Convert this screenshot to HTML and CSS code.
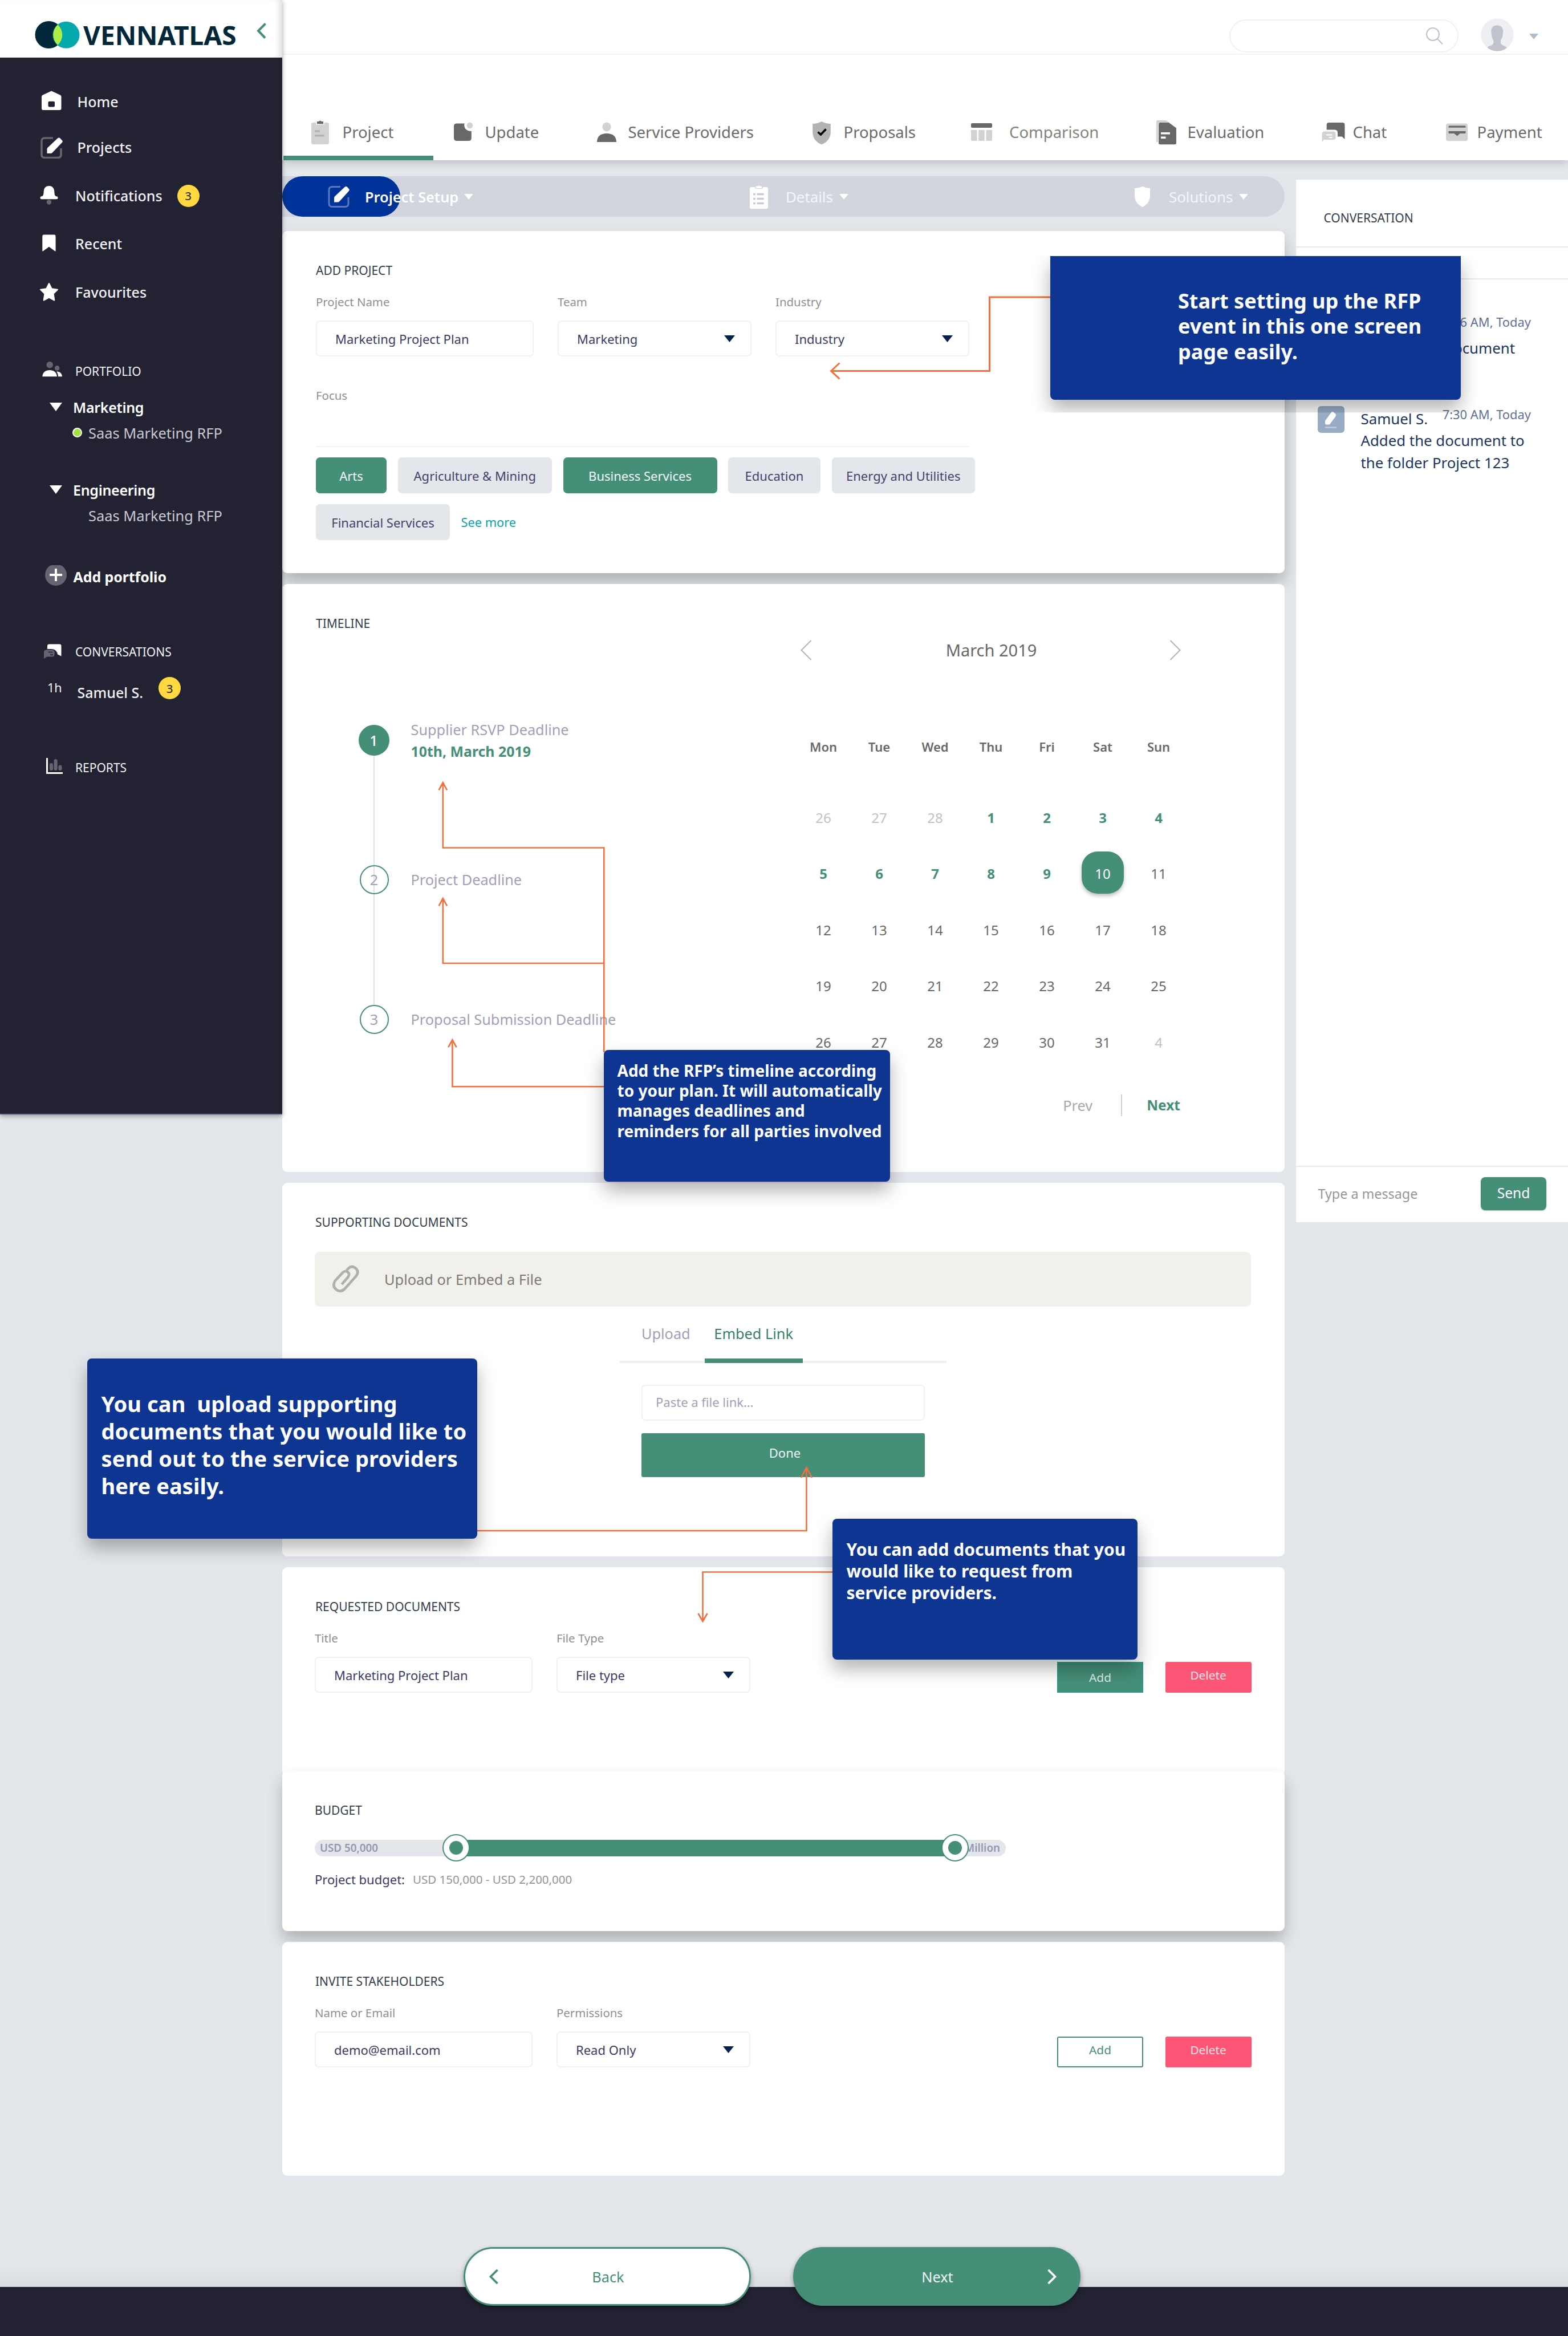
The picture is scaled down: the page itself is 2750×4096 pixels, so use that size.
FILE: index.html
```html
<!DOCTYPE html>
<html lang="en">
<head>
<meta charset="utf-8">
<title>VennAtlas – Project Setup</title>
<link rel="stylesheet" href="styles.css">
</head>
<body>
<div class="page">
  <div class="shell">
    <aside class="sidebar">
      <div class="brand">
        <svg width="80" height="50" viewBox="0 0 80 50"><circle cx="24.500" cy="25" r="24" fill="#02263a"/><circle cx="55" cy="25.300" r="23.500" fill="#05a8ad"/><path d="M40.300 7.300a24 24 0 0 1 0 35.600a24 24 0 0 1 0-35.600z" fill="#adef42"/></svg>
        <span class="brand-name">VENNATLAS</span>
        <svg class="brand-collapse" width="18" height="30" viewBox="0 0 18 30"><path d="M15.500 2.500L3 15l12 12.500" fill="none" stroke="#458f79" stroke-width="4"/></svg>
      </div>
      <nav class="side-nav">
        <a class="nav-row nav-wide"><svg width="40" height="40" viewBox="0 0 40 40"><path fill="#fff" fill-rule="evenodd" d="M20.200 1.500L35.500 8.500q2 1 2 3V32q0 3-3 3H6q-3 0-3-3V11.500q0-2 2-3zM16.500 19.700q-2 0-2 2v5.800q0 2 2 2H24q2 0 2-2v-5.800q0-2-2-2z"/></svg>Home</a>
        <a class="nav-row nav-wide nav-projects"><svg width="40" height="40" viewBox="0 0 40 40"><path d="M23 4H8.500Q3 4 3 9.500V33q0 5.500 5.500 5.500h23q5.500 0 5.500-5.500V22" fill="none" stroke="#656470" stroke-width="3.600"/><path fill="#fff" d="M12.500 31v-7.500q0-1.500 1-2.500L31 4.500q2.500-2 4.500 0l3.500 3.700q1.500 1.800 0 3.500L22 29.500q-1.500 1.500-3.500 1.500z"/></svg>Projects</a>
        <a class="nav-row nav-notifications"><svg width="40" height="40" viewBox="0 0 40 40"><circle cx="20" cy="31.500" r="4.200" fill="#656470"/><path fill="#fff" d="M20 3c6.500 0 9 4.500 9.300 10 .2 4 .7 8.300 3.700 8.300a2.500 2.500 0 0 1 0 5H7a2.500 2.500 0 0 1 0-5c3 0 3.500-4.300 3.700-8.300C11 7.500 13.500 3 20 3z"/></svg>Notifications<span class="badge">3</span></a>
        <a class="nav-row nav-recent"><svg width="40" height="40" viewBox="0 0 40 40"><path fill="#fff" d="M11 4.500h18q2.600 0 2.600 3V33.500q-1.500 0-3-1.500L20 25.700 11.300 32q-1.500 1.500-3 1.500V7.500q0-3 2.700-3z"/></svg>Recent</a>
        <a class="nav-row nav-favourites"><svg width="40" height="40" viewBox="0 0 40 40"><path fill="#fff" stroke="#fff" stroke-width="2" stroke-linejoin="round" d="M20 5l4.700 9.300 10.300 1.500-7.400 7.200 1.700 11.500L20 29.500l-9.300 5 1.700-11.500L5 15.800l10.300-1.500z"/></svg>Favourites</a>
        <div class="nav-row nav-heading nav-portfolio"><svg width="40" height="40" viewBox="0 0 40 40"><circle cx="15.200" cy="8.700" r="5.800" fill="#656470"/><circle cx="28.200" cy="14.400" r="4.300" fill="#656470"/><path fill="#fff" d="M2.300 29.300C3 21.500 8 18 15 18s12.500 3.500 13 11.300zM30 29.300c0-3-.8-6.300-3-8.800 5.500 0 9.500 2.500 10 8.800z"/></svg>PORTFOLIO</div>
        <div class="nav-row nav-folder"><svg width="22" height="15" viewBox="0 0 22 15"><path d="M0 0h22L11 15z" fill="#fff"/></svg>Marketing</div>
        <div class="nav-row nav-leaf"><i class="dot"></i>Saas Marketing RFP</div>
        <div class="nav-row nav-folder nav-engineering"><svg width="22" height="15" viewBox="0 0 22 15"><path d="M0 0h22L11 15z" fill="#fff"/></svg>Engineering</div>
        <div class="nav-row nav-leaf"><i class="dot dot-off"></i>Saas Marketing RFP</div>
        <div class="nav-row nav-add"><svg width="40" height="40" viewBox="0 0 40 40"><circle cx="20" cy="17" r="19" fill="#656470"/><path d="M20 6v22M9 17h22" stroke="#fff" stroke-width="4"/></svg>Add portfolio</div>
        <div class="nav-row nav-heading nav-conversations"><svg width="40" height="40" viewBox="0 0 40 40"><path fill="#fff" d="M14.500 6.500h18q3 0 3 3V27.500L29 24.500q-1.500-9-10-9.500h-8V9.500q0-3 3.500-3z"/><path fill="#656470" d="M9 16.500h10q4.600 0 4.600 4v4q0 4-4.600 4h-9L5 32V20.500q0-4 4-4z"/><path d="M12.500 20.500h8M16 25h5" stroke="#222233" stroke-width="1.300"/></svg>CONVERSATIONS</div>
        <div class="nav-row nav-person"><span class="ago">1h</span>Samuel S.<span class="badge">3</span></div>
        <div class="nav-row nav-heading nav-reports"><svg width="40" height="40" viewBox="0 0 40 40"><path d="M10.500 3v26.500H38" fill="none" stroke="#fff" stroke-width="3"/><path d="M18 15v7M25.600 8v14M33.500 18.500V22" stroke="#656470" stroke-width="6" stroke-linecap="round"/></svg>REPORTS</div>
      </nav>
    </aside>

    <div class="main">
      <header class="header">
        <div class="topbar">
          <div class="search"><svg width="32" height="32" viewBox="0 0 32 32"><circle cx="13" cy="13" r="11" fill="none" stroke="#b9c3cf" stroke-width="2"/><path d="M20.500 20.500L30 30.500" stroke="#b9c3cf" stroke-width="2"/></svg></div>
          <svg width="58" height="58" viewBox="0 0 58 58"><circle cx="29" cy="29" r="28.700" fill="#eeeff3"/><path fill="#c0c3cb" d="M28.700 12.600c8 0 10.500 5 10.500 11 0 3-.7 4-.9 7.500-.3 4-2.500 5-3.300 8-.6 3-.5 5.500 2 7.500 3 2 7.500 2.500 8.500 5.500-4 3.500-10 5.500-16.500 5.500S16 55.500 11.700 51.600c1-3 5.500-3 8.500-5.100 2.500-2 2.700-4.500 2-7.500-.7-3-2.700-4-3-8-.3-3.500-.9-4.500-.9-7.500 0-6 2.400-10.900 10.400-10.900z"/></svg>
          <svg class="avatar-caret" width="16" height="10" viewBox="0 0 16 10"><path d="M0 0h16L8 10z" fill="#aebccb"/></svg>
        </div>
        <nav class="tabs">
          <a class="tab"><svg width="44" height="44" viewBox="0 0 44 44"><rect y="5" width="31" height="38" rx="3" fill="#d2d2d2"/><path d="M8.500 3.500h14V8.500h-14z" fill="#fff"/><path d="M10 3h3.200a2.500 2.500 0 0 1 4.600 0H21v4.300H10z" fill="#686868"/><path d="M6 20h9M6 27.800h16.500" stroke="#b3b3b3" stroke-width="3.600"/></svg>Project</a>
          <a class="tab"><svg width="44" height="44" viewBox="0 0 44 44"><path d="M5 6.500h13.500c-1.500 7 2.500 13.500 12.300 13.500v12q0 5-5 5H5q-5 0-5-5V11.500q0-5 5-5z" fill="#686868"/><circle cx="28" cy="10" r="5.300" fill="#d2d2d2"/></svg>Update</a>
          <a class="tab"><svg width="44" height="44" viewBox="0 0 44 44"><circle cx="17" cy="12.500" r="7.700" fill="#d2d2d2"/><path d="M0 39C0 29 6.500 24 17 24s17 5 17 15z" fill="#686868"/></svg>Service Providers</a>
          <a class="tab"><svg width="44" height="44" viewBox="0 0 44 44"><path d="M16 3q7.500 4 15.800 4v15C31.800 33 24.500 40 16 43.300 7.500 40 .2 33 .2 22V7Q8.500 7 16 3z" fill="#b3b3b3"/><path d="M9.500 21.500l5 4.500 9-9.500" fill="none" stroke="#000" stroke-width="3.600"/></svg>Proposals</a>
          <a class="tab tab-comparison"><svg width="44" height="44" viewBox="0 0 44 44"><rect y="6" width="37" height="8" rx="2" fill="#686868"/><path d="M0 18h10.500v19H2q-2 0-2-2zM13.200 18h10.500v19H13.200zM26.500 18H37v17q0 2-2 2h-8.500z" fill="#d2d2d2"/></svg>Comparison</a>
          <a class="tab"><svg width="44" height="44" viewBox="0 0 44 44"><path d="M2 1h15l6 4H6Q3 5 3 8v31H0V3q0-2 2-2z" fill="#d2d2d2"/><path d="M6.500 5H22l13 9.500V41q0 2.300-2.500 2.300h-26Q4 43.300 4 41V7.500Q4 5 6.500 5z" fill="#686868"/><path d="M8 23.700h16M8 31.200h8.500" stroke="#fff" stroke-width="3.600"/></svg>Evaluation</a>
          <a class="tab"><svg width="44" height="44" viewBox="0 0 44 44"><path d="M12.500 5h24q4 0 4 4v25l-5-4.500H28V23q0-5.500-5.500-5.500H8.700V9q0-4 3.800-4z" fill="#686868"/><path d="M4.500 20.500h15.500q4.500 0 4.500 4.500V31q0 4-4.500 4H4l-3.500 4V25q0-4.500 4-4.500z" fill="#d2d2d2"/><path d="M8 26.500h10.500M13 31h5.500" stroke="#fff" stroke-width="2"/></svg>Chat</a>
          <a class="tab"><svg width="44" height="44" viewBox="0 0 44 44"><rect y="6.600" width="38" height="30.600" rx="4" fill="#d2d2d2"/><path d="M4.500 13.800v-1.800q0-1.500 1.500-1.500h27q1.500 0 1.500 1.500v1.800zM4.500 20h30v2.500q0 1.500-1.500 1.500h-8.500L19.500 28.500 14.500 24H6q-1.500 0-1.500-1.500z" fill="#686868"/></svg>Payment</a>
        </nav>
        <div class="tab-indicator"></div>
      </header>

      <div class="content">
        <div class="column">
          <div class="steps">
            <div class="steps-progress"></div>
            <div class="step step-current"><svg width="40" height="40" viewBox="0 0 40 40"><path d="M22 2.500H7.500Q2 2.500 2 8v24q0 5.500 5.500 5.500h23Q36 37.500 36 32V21" fill="none" stroke="#5a7abd" stroke-width="3"/><path fill="#fff" d="M11 29.500V22q0-1.500 1-2.500L29.500 3q2.500-2 4.500 0l3 3.200q1.500 1.800 0 3.500L20.500 28q-1.500 1.500-3.500 1.500z"/></svg>Project Setup<svg class="caret" width="16" height="10" viewBox="0 0 16 10"><path d="M0 0h16L8 10z" fill="#fff"/></svg></div>
            <div class="step"><svg width="40" height="42" viewBox="0 0 40 42"><path d="M3 4h6.500v3h13V4H29q3 0 3 3v32q0 3-3 3H3q-3 0-3-3V7q0-3 3-3z" fill="#fff"/><path d="M11 2.500h3a2.500 2.500 0 0 1 4 0h3v3.500H11z" fill="#fff"/><path d="M6 16.500h4M12.500 16.500h12M6 24.500h4M12.500 24.500h12M6 32.500h4M12.500 32.500h12" stroke="#c9cbd9" stroke-width="3.600"/></svg>Details<svg class="caret" width="16" height="10" viewBox="0 0 16 10"><path d="M0 0h16L8 10z" fill="#fff"/></svg></div>
            <div class="step"><svg width="37" height="36" viewBox="0 0 37 36"><path d="M13.500 0Q20 3 27 3v13c0 10-5.500 16-13.500 20C5.500 32 0 26 0 16V3q7 0 13.500-3z" fill="#fff"/></svg>Solutions<svg class="caret" width="16" height="10" viewBox="0 0 16 10"><path d="M0 0h16L8 10z" fill="#fff"/></svg></div>
          </div>

          <section class="card card-project">
            <h2>ADD PROJECT</h2>
            <div class="form-row">
              <label class="field field-text">Project Name<span class="control">Marketing Project Plan</span></label>
              <label class="field">Team<span class="control select">Marketing<svg width="19" height="12" viewBox="0 0 19 12"><path d="M0 0h19L9.500 12z" fill="#06204a"/></svg></span></label>
              <label class="field">Industry<span class="control select">Industry<svg width="19" height="12" viewBox="0 0 19 12"><path d="M0 0h19L9.500 12z" fill="#06204a"/></svg></span></label>
            </div>
            <div class="focus-label">Focus</div>
            <div class="tags">
              <span class="tag tag-on tag-arts">Arts</span><span class="tag tag-agri">Agriculture &amp; Mining</span><span class="tag tag-on tag-business">Business Services</span><span class="tag tag-education">Education</span><span class="tag tag-energy">Energy and Utilities</span><span class="tag tag-finance">Financial Services</span><a class="see-more">See more</a>
            </div>
          </section>

          <section class="card card-timeline">
            <h2>TIMELINE</h2>
            <div class="schedule">
              <ol class="timeline">
                <li><b class="pin pin-on">1</b><span>Supplier RSVP Deadline<br><strong>10th, March 2019</strong></span></li>
                <li><b class="pin">2</b><span>Project Deadline</span></li>
                <li><b class="pin">3</b><span>Proposal Submission Deadline</span></li>
              </ol>
              <div class="calendar">
                <div class="cal-head">
                  <svg width="20" height="36" viewBox="0 0 20 36"><path d="M18.500 1L1.500 18l17 17" fill="none" stroke="#b3b3b3" stroke-width="2"/></svg>
                  <span>March 2019</span>
                  <svg width="20" height="36" viewBox="0 0 20 36"><path d="M1.500 1l17 17-17 17" fill="none" stroke="#b3b3b3" stroke-width="2"/></svg>
                </div>
                <div class="cal-grid cal-days"><span>Mon</span><span>Tue</span><span>Wed</span><span>Thu</span><span>Fri</span><span>Sat</span><span>Sun</span></div>
                <div class="cal-grid cal-dates">
                  <span class="out">26</span><span class="out">27</span><span class="out">28</span><span class="on">1</span><span class="on">2</span><span class="on">3</span><span class="on">4</span>
                  <span class="on">5</span><span class="on">6</span><span class="on">7</span><span class="on">8</span><span class="on">9</span><span class="picked"><b>10</b></span><span>11</span>
                  <span>12</span><span>13</span><span>14</span><span>15</span><span>16</span><span>17</span><span>18</span>
                  <span>19</span><span>20</span><span>21</span><span>22</span><span>23</span><span>24</span><span>25</span>
                  <span>26</span><span>27</span><span>28</span><span>29</span><span>30</span><span>31</span><span class="out">4</span>
                </div>
                <div class="cal-pager"><span>Prev</span><i></i><strong>Next</strong></div>
              </div>
            </div>
          </section>

          <section class="card card-supporting">
            <h2>SUPPORTING DOCUMENTS</h2>
            <div class="upload-bar"><svg width="48" height="50" viewBox="0 0 48 50"><path d="M25 9.500l3-3.500q6.500-6 13 0t.5 13.500L22 41.500q-8 8-15.500 1.500T5 27.500L18.500 13q4.500-4 8.500-.5t.5 8.500L16.500 34" fill="none" stroke="#b0afaa" stroke-width="4.600"/></svg>Upload or Embed a File</div>
            <div class="embed">
              <div class="embed-tabs"><span>Upload</span><span class="embed-on">Embed Link</span></div>
              <div class="embed-input">Paste a file link…</div>
              <div class="embed-done">Done</div>
            </div>
          </section>

          <section class="card card-requested">
            <h2>REQUESTED DOCUMENTS</h2>
            <div class="form-row">
              <label class="field field-text">Title<span class="control">Marketing Project Plan</span></label>
              <label class="field">File Type<span class="control select">File type<svg width="19" height="12" viewBox="0 0 19 12"><path d="M0 0h19L9.500 12z" fill="#06204a"/></svg></span></label>
              <div class="row-actions"><span class="btn btn-add-solid">Add</span><span class="btn btn-delete">Delete</span></div>
            </div>
          </section>

          <section class="card card-budget">
            <h2>BUDGET</h2>
            <div class="slider">
              <span>USD 50,000</span><span>Million</span>
              <div class="slider-fill"><i class="knob"></i><i class="knob"></i></div>
            </div>
            <p class="budget-line"><b>Project budget:</b>USD 150,000 - USD 2,200,000</p>
          </section>

          <section class="card card-invite">
            <h2>INVITE STAKEHOLDERS</h2>
            <div class="form-row">
              <label class="field field-text">Name or Email<span class="control">demo@email.com</span></label>
              <label class="field">Permissions<span class="control select">Read Only<svg width="19" height="12" viewBox="0 0 19 12"><path d="M0 0h19L9.500 12z" fill="#06204a"/></svg></span></label>
              <div class="row-actions"><span class="btn btn-add">Add</span><span class="btn btn-delete">Delete</span></div>
            </div>
          </section>
        </div>

        <aside class="panel">
          <div class="panel-title">CONVERSATION</div>
          <div class="panel-sub"></div>
          <div class="messages">
            <div class="message message-short">
              <div class="message-text">document</div>
              <time>7:36 AM, Today</time>
            </div>
            <div class="message">
              <span class="message-icon"><svg width="26" height="30" viewBox="0 0 26 30"><path d="M13.500 2.500q2-2.500 4.500-.5l3 2.500q2 2 .5 4.500L12 22q-1 1.500-3 1.500H5q-2 0-2-2V18q0-1.500 1-2.500z" fill="#fff"/><path d="M3 28.500h20" stroke="#b7c6d8" stroke-width="3"/></svg></span>
              <div class="message-text">Samuel S.<br>Added the document to<br>the folder Project 123</div>
              <time>7:30 AM, Today</time>
            </div>
          </div>
          <div class="composer"><span>Type a message</span><b>Send</b></div>
        </aside>
      </div>
    </div>
  </div>

  <footer class="footer">
    <a class="pill pill-back"><svg width="18" height="28" viewBox="0 0 18 28"><path d="M15.500 2L3.500 14l12 12" fill="none" stroke="#458f79" stroke-width="3.600"/></svg><span>Back</span></a>
    <a class="pill pill-next"><span>Next</span><svg width="18" height="28" viewBox="0 0 18 28"><path d="M2.500 2l12 12-12 12" fill="none" stroke="#fff" stroke-width="3.600"/></svg></a>
  </footer>

  <svg class="arrows" width="2750" height="4096" viewBox="0 0 2750 4096" fill="none" stroke="#f2703d">
    <path stroke-width="3" d="M1842 521H1735.500V650.400H1458M1472.500 636.500L1457.500 650.400l15 14"/>
    <path stroke-width="2.600" d="M1059.300 1845V1486.500H776.800V1374M769.600 1385.300l7.200-13 7.200 13M1059.300 1689H776.800V1577M769.600 1588.300l7.200-13 7.200 13M1062 1905.300H793.400V1825M786.200 1836.300l7.200-13 7.200 13"/>
    <path stroke-width="2.600" d="M836 2684H1414.500V2575M1405 2591l9.500-17.500 9.500 17.500M1462 2756.500H1232.500V2842M1224.500 2829l8 14 8-14"/>
  </svg>
  <div class="callout callout-setup">Start setting up the RFP<br>event in this one screen<br>page easily.</div>
  <div class="callout callout-timeline">Add the RFP’s timeline according<br>to your plan. It will automatically<br>manages deadlines and<br>reminders for all parties involved</div>
  <div class="callout callout-upload">You can&nbsp; upload supporting<br>documents that you would like to<br>send out to the service providers<br>here easily.</div>
  <div class="callout callout-request">You can add documents that you<br>would like to request from<br>service providers.</div>
</div>
</body>
</html>
```
FILE: styles.css
```css
* { box-sizing: border-box; }
body { margin: 0; background: #e3e6eb; font-family: "Noto Sans", sans-serif; font-weight: 400; color: #43426b; }
svg { display: block; flex: none; }
h2, p, ol { margin: 0; padding: 0; font-weight: 400; }

.page { position: relative; width: 2750px; height: 4096px; overflow: hidden; }
.shell { display: flex; align-items: flex-start; height: 4010px; background: linear-gradient(#e3e6eb 3970px, #d8dbe0); }

/* sidebar */
.sidebar { position: relative; z-index: 3; width: 495px; height: 1954px; background: #222233; border-bottom: 2px solid #3d3b63; box-shadow: 0 3px 8px rgba(0, 0, 0, .35); }
.brand { display: flex; align-items: center; height: 101px; padding: 20px 0 0 61px; background: #fff; box-shadow: inset -12px 0 14px -10px rgba(0, 0, 0, .2); }
.brand-name { padding-left: 5px; font-size: 46px; font-weight: 700; line-height: 60px; color: #02263a; }
.brand-collapse { margin: -14px 0 0 35px; }
.side-nav { padding-top: 57px; color: #f2f2f5; font-size: 25px; font-weight: 500; }
.nav-row { display: flex; align-items: center; gap: 26px; height: 40px; padding-left: 66px; white-space: nowrap; }
.nav-wide { padding-left: 69.500px; }
.nav-projects { margin-top: 40px; }
.nav-notifications { margin-top: 45px; }
.nav-recent { margin-top: 44px; }
.nav-favourites { margin-top: 44.500px; }
.nav-heading { gap: 20px; padding-left: 72px; font-size: 21px; font-weight: 400; }
.nav-portfolio { margin-top: 99.500px; }
.nav-folder { gap: 19.500px; padding-left: 86.500px; margin-top: 22.500px; font-weight: 600; letter-spacing: -.3px; color: #fff; }
.nav-engineering { margin-top: 60px; }
.nav-leaf { gap: 11px; padding-left: 127px; margin-top: 5px; font-size: 25.400px; font-weight: 400; color: #c9c9d0; }
.nav-add { gap: 11px; padding-left: 77.500px; margin-top: 67px; font-weight: 700; letter-spacing: -.1px; color: #fff; }
.nav-conversations { margin-top: 92px; }
.nav-person { gap: 0; padding-left: 83px; margin-top: 31px; }
.nav-reports { margin-top: 92px; }
.ago { width: 52.500px; padding-bottom: 17px; font-size: 21.500px; font-weight: 400; }
.dot { width: 17px; height: 17px; border: 2px solid #fff; border-radius: 50%; background: #9fe33c; }
.dot-off { visibility: hidden; }
.badge { display: flex; align-items: center; justify-content: center; width: 39px; height: 39px; border-radius: 50%; background: #ffd841; color: #2f3a2a; font-size: 20.500px; font-weight: 500; }
.nav-person .badge { margin: 0 0 14px 27px; flex: none; }

/* header */
.main { width: 2255px; }
.header { position: relative; z-index: 2; height: 281px; background: #fff; box-shadow: 0 3px 16px rgba(0, 0, 0, .2); }
.topbar { display: flex; justify-content: flex-end; height: 96px; padding: 32px 52px 0 0; border-bottom: 2px solid #f3f3f4; }
.search { display: flex; align-items: center; justify-content: flex-end; width: 402px; height: 58px; margin: 2px 39px 0 0; padding-right: 24px; border: 2px solid #f0f1f5; border-radius: 29px; }
.avatar-caret { margin: 27px 0 0 27px; }
.tabs { display: grid; grid-template-columns: 250px 251px 378px 278px 325px 290px 218px 214px; align-content: start; height: 177px; padding: 96px 0 0 51px; }
.tab { display: flex; align-items: center; gap: 10.500px; height: 80px; color: #6a6a6a; font-size: 27.500px; line-height: 36px; white-space: nowrap; }
.tab-comparison { gap: 23px; color: #84827a; }
.tab-indicator { width: 263px; height: 8px; margin-left: 2px; background: #458f79; }

/* content columns */
.content { display: flex; align-items: flex-start; gap: 19.500px; }
.column { width: 1758px; padding-top: 28px; }

.steps { position: relative; display: grid; grid-template-columns: 740px 675px 1fr; align-items: center; height: 71px; padding-left: 80px; border-radius: 0 36px 36px 0; background: #d2d4de; color: #f4f5f9; font-size: 25.800px; }
.steps-progress { position: absolute; left: 0; top: 0; width: 207px; height: 71px; border-radius: 36px; background: #003399; }
.step { position: relative; display: flex; align-items: center; gap: 23px; white-space: nowrap; }
.step-current { gap: 25px; color: #fff; font-size: 25.300px; font-weight: 600; }
.step .caret { margin-left: -12px; }
.step-current .caret { margin-left: -15px; }

/* cards */
.card { padding: 54px 0 0 57px; background: #fff; border-radius: 9px; }
.card h2 { height: 30px; font-size: 21px; line-height: 30px; color: #333d4b; }
.card-project { position: relative; height: 600px; margin-top: 25px; padding-left: 59px; box-shadow: 0 16px 28px rgba(0, 0, 0, .23); }
.card-timeline { position: relative; height: 1031px; margin-top: 19px; padding-left: 59px; }
.card-supporting { height: 655px; margin-top: 19px; }
.card-requested { height: 366px; margin-top: 19px; }
.card-budget { position: relative; height: 281px; margin-top: -9px; box-shadow: 0 16px 28px rgba(0, 0, 0, .23); }
.card-invite { position: relative; height: 410px; margin-top: 19px; }
.card-supporting h2, .card-requested h2, .card-invite h2 { padding-left: 1px; }

.form-row { display: flex; align-items: flex-end; gap: 42px; margin-top: 25px; }
.field { display: flex; flex-direction: column; gap: 17.500px; width: 340px; font-size: 20.400px; line-height: 30px; color: #8f8f8f; }
.field-text { width: 382px; }
.control { display: flex; align-items: center; height: 63px; padding: 1px 32px 0; border: 2px solid #eef2f7; border-radius: 7px; color: #3b3a66; font-size: 22px; }
.select { justify-content: space-between; padding-right: 27px; }
.select svg { margin-top: 1px; }
.focus-label { width: 1146px; height: 106px; margin-top: 53.500px; border-bottom: 2px solid #f1f4f7; color: #8f8f8f; font-size: 20.400px; line-height: 30px; }

.tags { display: flex; flex-wrap: wrap; align-items: center; gap: 19px 19.500px; width: 1160px; margin-top: 18px; }
.tag { display: flex; align-items: center; justify-content: center; height: 63px; border-radius: 7px; background: #e3e6eb; font-size: 22px; }
.tag-on { background: #458f79; color: #f4f8f6; }
.tag-arts { width: 124px; }
.tag-agri { width: 270.500px; }
.tag-business { width: 270px; }
.tag-education { width: 162px; }
.tag-energy { width: 251.500px; }
.tag-finance { width: 235px; }
.see-more { color: #0aa5a9; font-size: 21.800px; }

.schedule { display: flex; align-items: flex-start; }
.timeline { width: 841px; padding-left: 74.500px; margin-top: 163px; list-style: none; background: linear-gradient(#e0e0ea, #e0e0ea) 101px 54px / 2px 437px no-repeat; color: #a0a0b8; font-size: 25.300px; line-height: 38.500px; white-space: nowrap; }
.timeline li { display: flex; align-items: center; height: 54px; margin-bottom: 190.500px; }
.timeline strong { color: #458f79; font-size: 24.900px; font-weight: 700; }
.pin { display: flex; align-items: center; justify-content: center; width: 51px; height: 51px; margin: 0 39px 0 2px; border: 2px solid #458f79; border-radius: 50%; font-weight: 400; }
.pin-on { width: 54px; height: 54px; margin: 0 38px 0 0; background: #458f79; color: #fff; font-weight: 500; }

.calendar { width: 686px; margin-top: 10px; color: #686868; }
.cal-head { display: flex; align-items: center; justify-content: space-between; height: 44px; padding: 0 10px 0 9px; font-size: 29px; }
.cal-head span { padding: 0 0 2px 2px; }
.cal-grid { display: grid; grid-template-columns: repeat(7, 98px); text-align: center; line-height: 98.600px; }
.cal-days { margin: 98px 0 26px; font-size: 22px; font-weight: 600; }
.cal-dates { font-size: 24px; grid-auto-rows: 98.600px; }
.cal-dates .out { color: #c2c2c2; }
.cal-dates .on { color: #458f79; font-weight: 700; }
.picked { display: flex; justify-content: center; padding-top: 10px; }
.picked b { width: 74px; height: 74px; border-radius: 28px; background: #458f79; color: #fff; font-weight: 400; line-height: 77px; box-shadow: 0 4px 6px rgba(0, 0, 0, .25); }
.cal-pager { display: flex; align-items: center; justify-content: flex-end; height: 40px; margin-top: 40px; padding-right: 11px; font-size: 25.300px; color: #a8a8a8; }
.cal-pager i { width: 2px; height: 38px; margin: 0 43px 0 50px; background: #cfcfcf; }
.cal-pager strong { color: #458f79; font-size: 24.500px; font-weight: 700; }

.upload-bar { display: flex; align-items: center; gap: 43px; width: 1642px; height: 96px; margin-top: 37px; padding: 0 0 1px 31px; border-radius: 8px; background: #f1f0eb; color: #7c7b76; font-size: 25.400px; }
.embed { width: 573px; height: 362px; margin-left: 535px; }
.embed-tabs { display: flex; height: 99px; padding-left: 38px; gap: 25px; background: linear-gradient(#efeff0, #efeff0) 0 95px / 100% 4px no-repeat; color: #a0a0b8; font-size: 25.300px; line-height: 38px; }
.embed-tabs span { padding-top: 28px; }
.embed-tabs .embed-on { width: 172px; border-bottom: 8px solid #458f79; color: #358069; text-align: center; }
.embed-input { width: 497px; height: 63px; margin: 38px 0 0 38px; padding-left: 23px; border: 2px solid #f0f0f5; border-radius: 7px; color: #a0a0b8; font-size: 22px; line-height: 57px; }
.embed-done { width: 497px; height: 77px; margin: 22px 0 0 38px; padding: 0 0 8px 6px; border-radius: 3px; background: #458f79; color: #eef5f2; font-size: 22px; line-height: 68px; text-align: center; }

.row-actions { display: flex; gap: 38.500px; margin-left: 496px; }
.btn { width: 151px; height: 54px; border-radius: 3px; font-size: 20.800px; line-height: 46px; text-align: center; }
.btn-add { border: 2px solid #458f79; color: #458f79; line-height: 42px; }
.btn-add-solid { border: 2px solid #2a9a8a; border-radius: 0; background: #458f79; color: #dfece8; line-height: 50px; }
.btn-delete { background: #fd5576; color: #ffe3e8; }

.slider { position: relative; display: flex; align-items: center; justify-content: space-between; width: 1212px; height: 29px; margin-top: 36.500px; padding: 0 10px 0 9px; border-radius: 15px; background: #e3e6eb; color: #9697b0; font-size: 18.800px; font-weight: 600; }
.slider-fill { position: absolute; left: 248px; top: 0; display: flex; align-items: center; justify-content: space-between; width: 875px; height: 29px; background: #458f79; }
.knob { width: 48px; height: 48px; margin: 0 -24px; border: 2px solid #458f79; border-radius: 50%; background: radial-gradient(circle, #458f79 11.500px, #fff 12.500px); }
.budget-line { display: flex; gap: 14px; height: 30px; margin-top: 25px; color: #949494; font-size: 20.500px; line-height: 30px; }
.budget-line b { color: #3b3a66; font-size: 22px; font-weight: 400; }

/* conversation panel */
.panel { display: flex; flex-direction: column; width: 477.500px; height: 1828px; margin-top: 34px; background: #fff; }
.panel-title { height: 119px; padding: 17px 0 0 49px; border-bottom: 2px solid #e5eaf0; color: #333d4b; font-size: 21px; line-height: 100px; }
.panel-sub { height: 56px; border-bottom: 2px solid #e5eaf0; }
.messages { flex: 1; padding: 60px 65px 0 38px; }
.message { position: relative; display: flex; align-items: flex-start; height: 162px; }
.message-icon { display: flex; align-items: center; justify-content: center; width: 47px; height: 47px; border-radius: 6px; background: #96abc4; }
.message-text { margin: 3px 0 0 29px; color: #1d3563; font-size: 25.800px; line-height: 38.400px; white-space: nowrap; }
.message-short { justify-content: flex-end; padding: 38.400px 28px 0 0; }
.message time { position: absolute; right: 0; top: 0; color: #5f7297; font-size: 21.900px; line-height: 30px; }
.composer { display: flex; align-items: center; justify-content: space-between; height: 99px; padding: 0 38px 3px 39px; border-top: 2px solid #e6e8f1; color: #92979f; font-size: 23.300px; }
.composer b { width: 115px; height: 58px; border-radius: 8px; background: #458f79; color: #fff; font-size: 24.600px; font-weight: 400; line-height: 56px; text-align: center; box-shadow: 0 1px 2px rgba(0, 0, 0, .3); }

/* footer */
.footer { display: flex; gap: 74px; height: 86px; padding-left: 812.500px; background: #222233; }
.pill { position: relative; display: flex; align-items: center; width: 504px; height: 103px; margin-top: -70px; padding: 0 41px; border-radius: 52px; font-size: 25.300px; box-shadow: 0 4px 8px rgba(0, 0, 0, .35); }
.pill span { flex: 1; text-align: center; }
.pill-back { border: 3px solid #458f79; background: #fff; color: #458f79; }
.pill-back span { padding-right: 14px; }
.pill-next { background: #458f79; color: #eef5f2; }
.pill-next span { padding-left: 21px; }

/* annotations floating over the screen */
.arrows { position: absolute; left: 0; top: 0; z-index: 4; }
.callout { position: absolute; z-index: 5; border-radius: 8px; background: #0e3592; color: #fff; font-weight: 700; white-space: nowrap; box-shadow: 0 16px 32px rgba(0, 0, 0, .3); }
.callout-setup { left: 1841.500px; top: 448.500px; width: 720.500px; height: 252px; padding: 57px 0 0 224.500px; border-radius: 0 0 8px 8px; font-size: 36px; line-height: 44.600px; clip-path: inset(0 -60px -23px -60px); }
.callout-timeline { left: 1058.500px; top: 1840.500px; width: 502px; height: 231px; padding: 19px 0 0 24px; font-size: 28px; line-height: 35.400px; }
.callout-upload { left: 153px; top: 2381.500px; width: 684px; height: 316px; padding: 55.500px 0 0 24.500px; font-size: 38px; letter-spacing: .1px; line-height: 48.100px; }
.callout-request { left: 1460px; top: 2663px; width: 535px; height: 246.500px; padding: 35px 0 0 24.500px; font-size: 30px; line-height: 38px; }
```
